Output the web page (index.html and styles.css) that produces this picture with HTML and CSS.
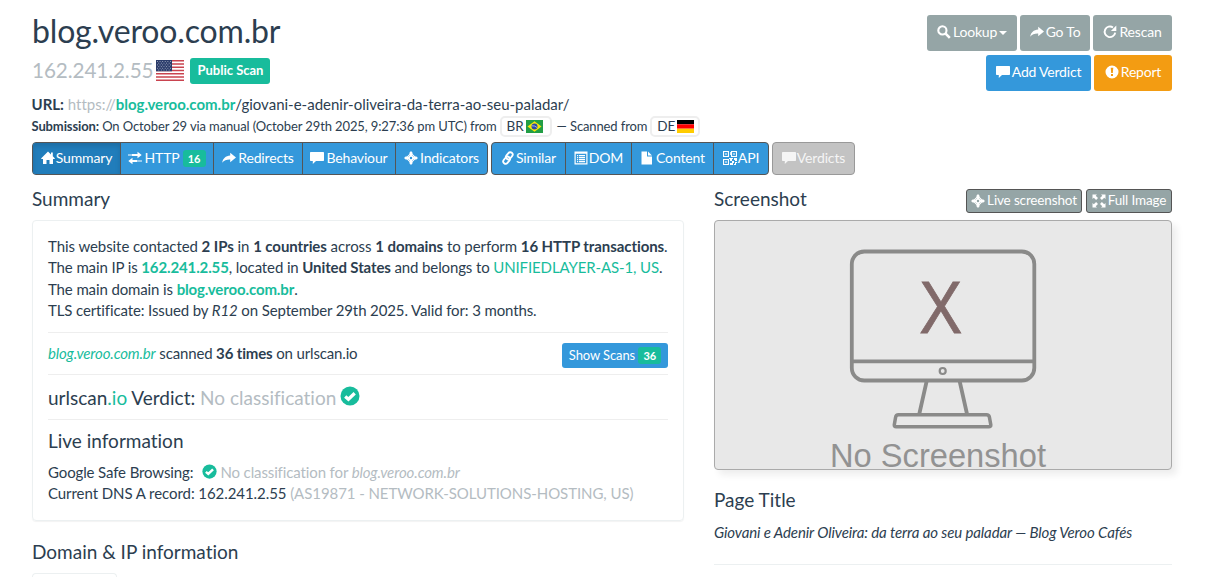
FILE: index.html
```html
<!DOCTYPE html>
<html lang="en">
<head>
<meta charset="utf-8">
<title>blog.veroo.com.br - urlscan.io</title>
<link rel="stylesheet" href="styles.css">
</head>
<body>
<svg class="sprite" aria-hidden="true">
  <symbol id="search" viewBox="0 0 14 14"><circle cx="5.4" cy="5.4" r="4.1" fill="none" stroke="currentColor" stroke-width="2.1"/><path d="M8.4 8.4l4.4 4.4" stroke="currentColor" stroke-width="2.6"/></symbol>
  <symbol id="share" viewBox="0 0 14 14"><path d="M8.2 1.8 14 6.6 8.2 11.2V8.5C4.700 8.400 2 9.300.2 11.800.8 7.600 3.600 4.900 8.200 4.600z"/></symbol>
  <symbol id="repeat" viewBox="0 0 14 14"><path d="M10 2.500A5.300 5.300 0 1 0 12.200 7.600" fill="none" stroke="currentColor" stroke-width="1.900"/><path d="M13.300.5V5.900H7.900z"/></symbol>
  <symbol id="comment" viewBox="0 0 14 14"><path d="M.7 1H13.300Q14 1 14 1.700V9.300Q14 10 13.300 10H6L2.800 13V10H.7Q0 10 0 9.300V1.700Q0 1 .7 1z"/></symbol>
  <symbol id="alert" viewBox="0 0 14 14"><path fill-rule="evenodd" d="M7 .5a6.500 6.500 0 1 0 0 13 6.500 6.500 0 1 0 0-13zM5.700 2.800h2.600L7.800 8H6.200zM6 9h2v2H6z"/></symbol>
  <symbol id="home" viewBox="0 0 14 14"><path d="M7 .5 10 3.500V1.500h1.800v3.800L14 7.500l-.6.5H12v5H8.500V9h-3v4H2V8H.6L0 7.500z"/></symbol>
  <symbol id="transfer" viewBox="0 0 14 14"><path d="M9.500 .8 13.700 4 9.500 7.200V5H4V3h5.500zM2.500 3h1v2h-1zM.5 3h1v2h-1zM4.500 6.800.3 10l4.200 3.200V11H9.500V9h-5zM10.500 9h1v2h-1zM12.500 9h1v2h-1z"/></symbol>
  <symbol id="target" viewBox="0 0 14 14"><path fill-rule="evenodd" d="M7 0 9.200 2.500H8V4.200L9.800 6H11.500V4.800L14 7l-2.500 2.200V8H9.800L8 9.800V11.500H9.200L7 14 4.800 11.500H6V9.800L4.200 8H2.500V9.200L0 7 2.500 4.800V6H4.200L6 4.200V2.500H4.800zM7 5.800A1.200 1.200 0 1 0 7 8.200 1.200 1.200 0 1 0 7 5.800z"/><path d="M7 2.200 11.800 7 7 11.800 2.200 7z" fill="none" stroke="currentColor" stroke-width="1.100"/></symbol>
  <symbol id="link" viewBox="0 0 14 14"><g fill="none" stroke="currentColor" stroke-width="1.800"><rect x="5.900" y=".9" width="4.800" height="7.800" rx="2.400" transform="rotate(40 8.300 4.800)"/><rect x="3.200" y="5.300" width="4.800" height="7.800" rx="2.400" transform="rotate(40 5.600 9.200)"/></g></symbol>
  <symbol id="list" viewBox="0 0 14 14"><path fill-rule="evenodd" d="M.5 .5h13v13H.5zM1.700 2.700v9.600h10.600V2.700z"/><path d="M3 4h1.200v1.200H3zM5 4h6v1.200H5zM3 6h1.200v1.200H3zM5 6h6v1.200H5zM3 8h1.200v1.200H3zM5 8h6v1.200H5zM3 10h1.200v1.200H3zM5 10h6v1.200H5z"/></symbol>
  <symbol id="file" viewBox="0 0 14 14"><path d="M1.500 .5H7V5.500H12V13.500H1.500zM8 .5 12 4.500H8z"/></symbol>
  <symbol id="qr" viewBox="0 0 14 14"><path fill-rule="evenodd" d="M0 0h6v6H0zM1.100 1.100v3.800h3.800V1.100zM8 0h6v6H8zM9.100 1.100v3.800h3.800V1.100zM0 8h6v6H0zM1.100 9.100v3.800h3.800V9.100zM2.300 2.300h1.400v1.400H2.300zM10.300 2.300h1.400v1.400h-1.400zM2.300 10.300h1.400v1.400H2.300zM7 1h.8v3H7zM6 7h4v1H6zM7 8h2v2H7zM11 7h3v3h-2V9h-1zM9 10h2v2H9zM7 12h3v2H7zM12 11h2v1h-1v2h-2v-1h1z"/></symbol>
  <symbol id="full" viewBox="0 0 14 14"><path d="M.5.5H5L3.700 1.800 6 4.100 4.100 6 1.800 3.700.5 5zM13.500.5V5L12.200 3.700 9.900 6 8 4.100 10.300 1.800 9 .5zM.5 13.500V9L1.800 10.300 4.100 8 6 9.900 3.700 12.200 5 13.500zM13.500 13.500H9L10.300 12.200 8 9.900 9.900 8 12.200 10.300 13.500 9z"/></symbol>
  <symbol id="ok" viewBox="0 0 20 20"><circle cx="10" cy="10" r="9.500"/><path d="M5.200 10.500 8.400 13.200 14.700 7.200" fill="none" stroke="#fff" stroke-width="3.300"/></symbol>
</svg>
<div class="container">
  <header class="top">
    <div class="ident">
      <h1>blog.veroo.com.br</h1>
      <div class="ip"><span>162.241.2.55</span>
        <svg class="flag-us" viewBox="0 0 28 21"><path fill="#fff" d="M0 0h28v21H0z"/><path stroke="#c9434f" stroke-width="1.615" d="M0 .8h28M0 4.040h28M0 7.270h28M0 10.500h28M0 13.730h28M0 16.960h28M0 20.200h28"/><path fill="#2b3c6b" d="M0 0h16v11.300H0z"/><path stroke="#b9c0d2" stroke-width=".8" stroke-dasharray=".9 1.700" d="M1 1.500h14M2.300 3.200h12M1 4.900h14M2.300 6.600h12M1 8.300h14M2.300 10h12"/></svg>
        <b class="label">Public Scan</b></div>
      <div class="url"><b>URL:</b> <span class="muted">https://</span><b class="green">blog.veroo.com.br</b>/giovani-e-adenir-oliveira-da-terra-ao-seu-paladar/</div>
      <div class="submission"><span><b>Submission:</b> On October 29 via manual (October 29th 2025, 9:27:36 pm UTC) from</span>
        <span class="country br">BR<svg width="17" height="13" viewBox="0 0 17 13"><path fill="#229e45" d="M0 0h17v13H0z"/><path fill="#f8e509" d="M8.500 1.300 15.500 6.500 8.500 11.700 1.500 6.500z"/><circle cx="8.500" cy="6.500" r="3" fill="#2b49a3"/><path d="M5.800 5.800q3-.4 5.200 1.700" stroke="#dbe4ef" stroke-width=".7" fill="none"/></svg></span>
        <span class="dash">— Scanned from</span>
        <span class="country de">DE<svg width="17" height="13" viewBox="0 0 17 13"><path fill="#000" d="M0 0h17v4.300H0z"/><path fill="#f00" d="M0 4.300h17v4.400H0z"/><path fill="#fc0" d="M0 8.700h17V13H0z"/></svg></span></div>
    </div>
    <div class="actions">
      <div class="arow"><a class="btn w90"><svg class="i"><use href="#search"/></svg>Lookup<i class="caret"></i></a><a class="btn w70"><svg class="i"><use href="#share"/></svg>Go To</a><a class="btn w79"><svg class="i"><use href="#repeat"/></svg>Rescan</a></div>
      <div class="arow"><a class="btn blue w105"><svg class="i"><use href="#comment"/></svg>Add Verdict</a><a class="btn orange w78"><svg class="i"><use href="#alert"/></svg>Report</a></div>
    </div>
  </header>
  <nav class="tabs">
    <div class="group"><a class="tab t1 active"><svg class="i"><use href="#home"/></svg>Summary</a><a class="tab t2"><svg class="i gap"><use href="#transfer"/></svg>HTTP<b class="badge">16</b></a><a class="tab t3"><svg class="i gap"><use href="#share"/></svg>Redirects</a><a class="tab t4"><svg class="i gap"><use href="#comment"/></svg>Behaviour</a><a class="tab t5"><svg class="i gap"><use href="#target"/></svg>Indicators</a></div>
    <div class="group"><a class="tab t6"><svg class="i"><use href="#link"/></svg>Similar</a><a class="tab t7"><svg class="i"><use href="#list"/></svg>DOM</a><a class="tab t8"><svg class="i gap"><use href="#file"/></svg>Content</a><a class="tab t9"><svg class="i"><use href="#qr"/></svg>API</a></div>
    <div class="group disabled"><a class="tab t10"><svg class="i"><use href="#comment"/></svg>Verdicts</a></div>
  </nav>
  <main class="cols">
    <section class="left">
      <h4>Summary</h4>
      <div class="panel">
        <div class="lines"><div class="wide">This website contacted <b>2 IPs</b> in <b>1 countries</b> across <b>1 domains</b> to perform <b>16 HTTP transactions</b>.</div>
        <div>The main IP is <b class="green">162.241.2.55</b>, located in <b>United States</b> and belongs to <span class="green">UNIFIEDLAYER-AS-1, US</span>.</div>
        <div>The main domain is <b class="green">blog.veroo.com.br</b>.</div>
        <div>TLS certificate: Issued by <i>R12</i> on September 29th 2025. Valid for: 3 months.</div></div>
        <div class="scans"><span><i class="green">blog.veroo.com.br</i> scanned <b>36 times</b> on urlscan.io</span><a class="show">Show Scans<b class="badge">36</b></a></div>
        <div class="verdict"><span>urlscan<span class="green">.io</span> Verdict: <span class="muted">No classification</span></span><svg class="ok20"><use href="#ok"/></svg></div>
        <h4 class="live">Live information</h4>
        <div class="gsb">Google Safe Browsing: <svg class="ok15"><use href="#ok"/></svg><span class="muted">No classification for <i>blog.veroo.com.br</i></span></div>
        <div class="wide">Current DNS A record: 162.241.2.55 <span class="muted">(AS19871 - NETWORK-SOLUTIONS-HOSTING, US)</span></div>
      </div>
      <h4 class="domain">Domain &amp; IP information</h4>
      <div class="nexttab"></div>
    </section>
    <section class="right">
      <div class="shothead"><h4>Screenshot</h4><div class="shotbtns"><a class="xs w116"><svg class="i"><use href="#target"/></svg>Live screenshot</a><a class="xs w86"><svg class="i"><use href="#full"/></svg>Full Image</a></div></div>
      <svg class="shot" viewBox="0 0 456 248"><g fill="none" stroke="#8a8a89" stroke-width="3.800"><rect x="136.800" y="30.500" width="182.500" height="129" rx="12.500"/><path d="M137 140.300h182M211.700 160l-7.300 32.500M244.600 160l7.300 32.500"/><circle cx="227.700" cy="150" r="3" stroke-width="2.200"/><path d="M183.500 193.800h88q2.400 0 2.900 2.300l1.400 7.700q.2 2-2 2h-92.700q-2 0-1.800-2l1.300-7.500q.4-2.500 2.900-2.500z" stroke-width="3.500"/></g><text class="xmark" x="204.300" y="112" textLength="43" lengthAdjust="spacingAndGlyphs">X</text><text class="noshot" x="115" y="246" textLength="216" lengthAdjust="spacingAndGlyphs">No Screenshot</text></svg>
      <h4 class="ptitle">Page Title</h4>
      <div class="pt"><i>Giovani e Adenir Oliveira: da terra ao seu paladar — Blog Veroo Cafés</i></div>
    </section>
  </main>
</div>
</body>
</html>
```
FILE: styles.css
```css
* { box-sizing: border-box; }
body { margin: 0; height: 577px; overflow: hidden; background: #fff; color: #2c3e50; font: 15px/21.43px Lato, sans-serif; font-variant-ligatures: none; }
.sprite { display: none; }
svg { fill: currentColor; flex: none; }
.container { width: 1140px; margin-left: 32px; white-space: nowrap; }
h1, h4 { margin: 0; font-weight: 400; letter-spacing: 0; }
.muted { color: #b4bcc2; }
.green { color: #18bc9c; }
.top { display: flex; justify-content: space-between; height: 142px; padding-top: 15px; }
h1 { font-size: 32px; line-height: 31px; letter-spacing: -.16px; }
.ip { display: flex; align-items: center; height: 28px; margin-top: 10px; padding-top: 1px; font-size: 20.7px; letter-spacing: -.1px; color: #b4bcc2; }
.flag-us { width: 28px; height: 21px; margin-left: 3px; }
.label { width: 80px; height: 26px; margin-left: 6px; border-radius: 3px; background: #18bc9c; color: #fff; font-size: 13px; line-height: 25px; letter-spacing: 0; text-align: center; }
.url { margin: 10px 0 0 -.5px; }
.submission { display: flex; align-items: center; font-size: 13px; height: 21px; margin: .5px 0 0 -.5px; letter-spacing: -.12px; }
.country { display: flex; align-items: center; gap: 2px; height: 21px; border: 2px solid #eee; border-radius: 5px; padding-left: 5px; font-size: 13.5px; }
.br { width: 52px; margin-left: 3px; }
.de { width: 50px; margin-left: 3px; }
.dash { margin-left: 5px; }
.actions { display: flex; flex-direction: column; align-items: flex-end; gap: 4px; }
.arow { display: flex; gap: 3px; }
.btn { display: flex; align-items: center; justify-content: center; gap: 2px; height: 36px; padding-bottom: 2px; border-radius: 3px; background: #95a5a6; color: #fff; font-size: 14px; letter-spacing: -.2px; }
.blue { background: #3498db; }
.orange { background: #f39c12; }
.i { width: 14px; height: 14px; }
.caret { border: 4px solid transparent; border-top-color: #fff; border-bottom: 0; margin-top: 2px; }
.w90 { width: 90px; } .w70 { width: 70px; } .w79 { width: 79px; } .w105 { width: 105px; } .w78 { width: 78px; }
.w116 { width: 116px; } .w86 { width: 86px; }
.tabs { display: flex; gap: 3px; height: 33px; }
.group { display: flex; border: 1px solid #555; border-radius: 4px; overflow: hidden; background: #3498db; }
.tab { display: flex; align-items: center; justify-content: center; gap: 1px; height: 31px; padding-bottom: 1px; color: #fff; font-size: 14px; letter-spacing: -.15px; border-left: 1px solid #555; }
.tab:first-child { border-left: 0; }
.gap { margin-right: 1px; }
.active { background: #217dbb; box-shadow: inset 0 3px 5px rgba(0,0,0,.125); }
.t1 { width: 87px; } .t2 { width: 93px; } .t3 { width: 89px; } .t4 { width: 93px; } .t5 { width: 92px; }
.t6 { width: 73px; } .t7 { width: 66px; } .t8 { width: 82px; } .t9 { width: 55px; } .t10 { width: 81px; }
.disabled { background: #c3c3c3; border-color: #999; }
.disabled .tab { color: #f5f5f5; }
.badge { display: inline-block; width: 23px; height: 17px; border-radius: 3px; background: #18bc9c; font-size: 11px; line-height: 17px; text-align: center; margin-left: 2px; }
.cols { display: flex; gap: 30px; }
.left { width: 652px; }
.right { width: 458px; }
h4 { font-size: 19px; line-height: 21px; }
.left > h4:first-child { margin: 13px 0 11px; }
.panel { height: 301px; padding: 15px; border: 1px solid #ecf0f1; border-radius: 4px; box-shadow: 0 1px 1px rgba(0,0,0,.05); letter-spacing: -.12px; }
.panel .wide { letter-spacing: -.07px; }
.lines { height: 96px; }
.scans { display: flex; justify-content: space-between; align-items: center; height: 42px; border-top: 1px solid #eee; letter-spacing: -.15px; }
.show { display: flex; align-items: center; justify-content: center; gap: 1px; width: 106px; height: 25px; margin-top: 4px; border-radius: 3px; background: #3498db; color: #fff; font-size: 13px; letter-spacing: -.1px; }
.verdict { display: flex; align-items: center; gap: 4px; height: 46px; border-top: 1px solid #eee; border-bottom: 1px solid #eee; font-size: 19px; padding-top: 1px; letter-spacing: 0; }
.ok20 { width: 20px; height: 20px; color: #18bc9c; margin-top: -3px; }
.ok15 { width: 15px; height: 15px; color: #18bc9c; margin: -2px 3px 0 9px; }
.live { margin: 10px 0 11px; }
.gsb { display: flex; align-items: center; }
.domain { margin: 20px 0 11px; }
.nexttab { width: 85px; height: 4px; border: 1px solid #ecf0f1; border-bottom: 0; border-radius: 4px 4px 0 0; }
.shothead { display: flex; justify-content: space-between; align-items: center; margin: 14px 0 7px; height: 24px; }
.shothead h4 { margin-top: -5px; }
.shotbtns { display: flex; gap: 4px; }
.xs { display: flex; align-items: center; justify-content: center; gap: 2px; height: 24px; padding-bottom: 1px; border: 1px solid #555; border-radius: 3px; background: #95a5a6; color: #fff; font-size: 13.5px; letter-spacing: -.15px; }
.shot { display: block; width: 458px; height: 250px; border: 1px solid #aaa; border-radius: 4px; background: #e8e8e8; box-shadow: 5px 5px 7px rgba(0,0,0,.07); }
.xmark { font: 74px "Liberation Sans", sans-serif; fill: #816a6a; stroke: #816a6a; stroke-width: .8px; }
.noshot { font: 34px "Liberation Sans", sans-serif; fill: #929292; }
.ptitle { margin: 19px 0 12px; }
.pt { padding-bottom: 21px; border-bottom: 1px solid #ecf0f1; letter-spacing: -.11px; }
```
